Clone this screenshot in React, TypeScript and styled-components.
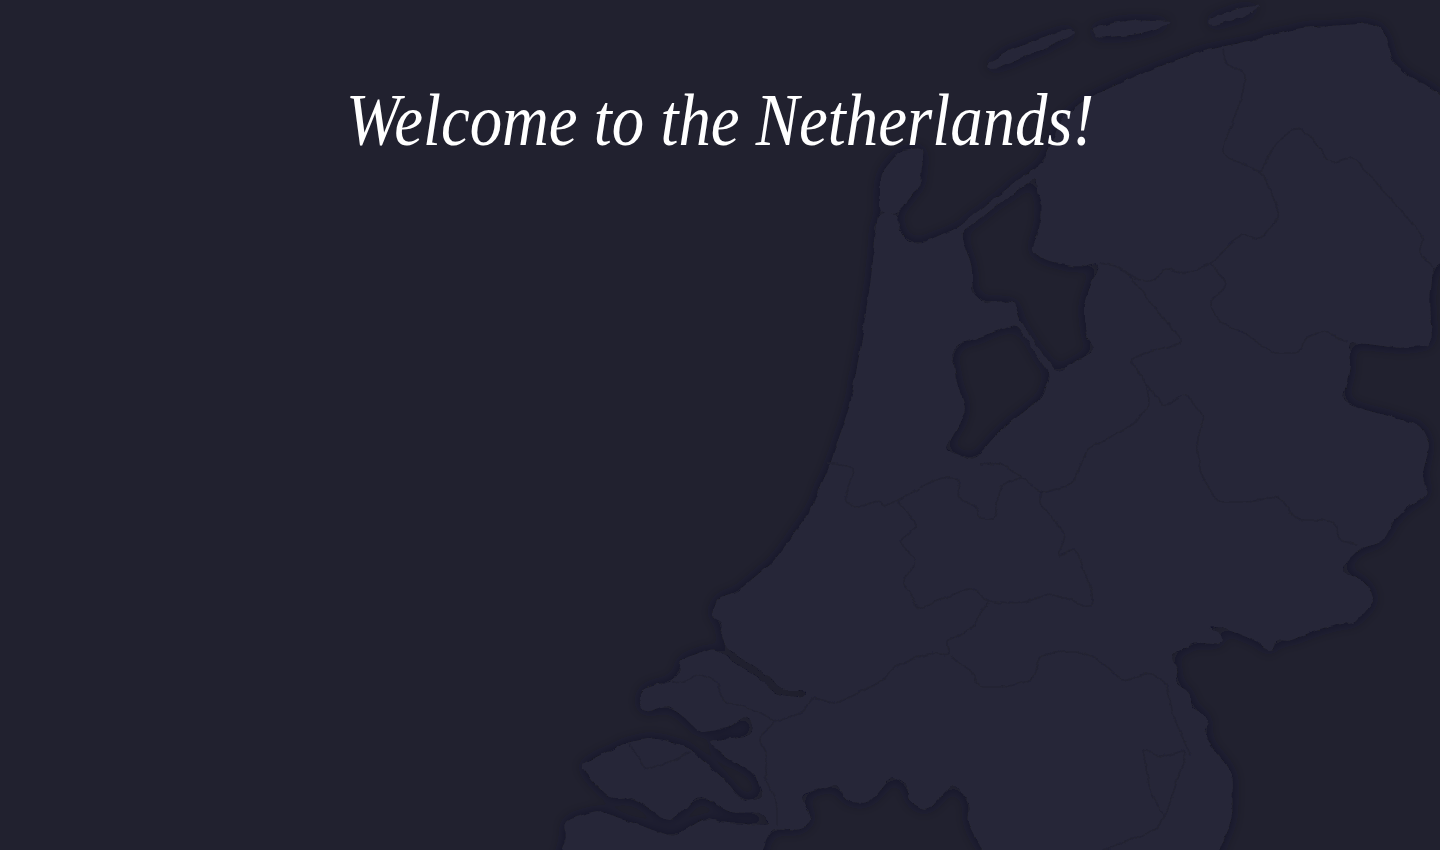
import styled, { createGlobalStyle } from 'styled-components';

type Punt = [number, number];

const raio = 7;

// rounds each corner only a little, long stretches stay straight
const recua = (de: Punt, para: Punt): Punt => {
  const dx = para[0] - de[0];
  const dy = para[1] - de[1];
  const len = Math.hypot(dx, dy) || 1;
  const r = Math.min(raio, len / 2);
  return [de[0] + (dx / len) * r, de[1] + (dy / len) * r];
};

const suaviza = (pts: Punt[], fechado = false): string => {
  const n = pts.length;
  if (fechado) {
    const ini = recua(pts[0], pts[n - 1]);
    let d = `M${ini[0]} ${ini[1]}`;
    pts.forEach((p, i) => {
      const prox = pts[(i + 1) % n];
      const sai = recua(p, prox);
      const entra = recua(prox, p);
      d += `Q${p[0]} ${p[1]} ${sai[0]} ${sai[1]}L${entra[0]} ${entra[1]}`;
    });
    return d + 'Z';
  }
  let d = `M${pts[0][0]} ${pts[0][1]}`;
  for (let i = 1; i < n - 1; i++) {
    const entra = recua(pts[i], pts[i - 1]);
    const sai = recua(pts[i], pts[i + 1]);
    d += `L${entra[0]} ${entra[1]}Q${pts[i][0]} ${pts[i][1]} ${sai[0]} ${sai[1]}`;
  }
  return d + `L${pts[n - 1][0]} ${pts[n - 1][1]}`;
};

const continente: Punt[] = [
  [878, 213], [872, 270], [862, 340], [850, 405], [830, 465], [808, 515], [775, 560], [743, 587], [731, 595], [718, 597],
  [712, 618], [724, 622], [720, 638], [727, 648], [745, 660], [768, 675], [780, 690], [806, 690], [804, 698], [775, 694],
  [758, 677], [735, 664], [716, 647], [680, 660], [680, 673], [670, 683], [643, 688], [638, 702], [645, 713], [666, 705],
  [682, 715], [700, 733], [731, 727], [743, 715], [755, 725], [748, 737], [708, 742], [727, 758], [754, 772], [764, 798],
  [743, 802], [727, 782], [700, 758], [685, 746], [655, 738], [628, 742], [580, 765], [596, 785], [613, 800], [632, 797],
  [670, 822], [700, 795], [731, 813], [758, 812], [772, 825], [724, 823], [705, 818], [674, 837], [647, 828], [597, 810],
  [563, 822], [567, 838], [561, 850], [555, 870], [762, 870], [762, 850], [773, 828], [804, 830], [812, 818], [800, 795],
  [838, 783], [846, 802], [869, 803], [892, 775], [909, 785], [907, 800], [927, 812], [953, 783], [970, 802], [968, 822],
  [978, 842], [999, 870], [1212, 870], [1232, 818], [1233, 775], [1220, 758], [1203, 733], [1210, 718], [1190, 708],
  [1190, 692], [1173, 683], [1180, 672], [1170, 655], [1197, 642], [1220, 645], [1223, 635], [1207, 627], [1220, 627],
  [1247, 637], [1273, 652], [1277, 638], [1287, 642], [1310, 632], [1343, 622], [1352, 625], [1370, 607], [1375, 595],
  [1360, 578], [1343, 572], [1343, 565], [1360, 548], [1383, 542], [1393, 522], [1410, 505], [1428, 495], [1422, 475],
  [1430, 445], [1420, 425], [1365, 410], [1342, 400], [1350, 370], [1350, 342], [1400, 348], [1432, 345], [1430, 300],
  [1433, 267], [1455, 255], [1455, 110], [1430, 87], [1410, 77], [1391, 60], [1385, 33], [1374, 23], [1300, 28], [1253, 40],
  [1200, 52], [1150, 70], [1090, 97], [1062, 118], [1042, 165], [1030, 171], [958, 227], [934, 238], [918, 245], [901, 236],
  [897, 213],
];

const lago: Punt[] = [
  [1036, 177], [1041, 207], [1039, 233], [1031, 250], [1047, 262], [1079, 267], [1100, 262], [1085, 300], [1085, 333],
  [1096, 350], [1056, 373], [1020, 322], [1014, 300], [985, 303], [972, 293], [972, 267], [960, 233],
];

const marker: Punt[] = [
  [1005, 328], [1016, 324], [1050, 375], [1040, 400], [1000, 430], [975, 460], [945, 450], [959, 425], [966, 410], [955, 377],
  [953, 348], [962, 343],
];

const ilhas: Punt[][] = [
  [[880, 175], [900, 150], [924, 148], [920, 185], [898, 213], [880, 213]],
  [[985, 66], [1010, 50], [1072, 28], [1075, 34], [1030, 54], [992, 70]],
  [[1090, 28], [1130, 20], [1173, 22], [1140, 34], [1098, 38]],
  [[1207, 20], [1240, 8], [1263, 5], [1240, 18], [1210, 26]],
];

const divisas: Punt[][] = [
  [[1223, 50], [1226, 65], [1246, 72], [1242, 97], [1223, 147], [1226, 157], [1261, 172], [1267, 180], [1280, 217], [1259, 240], [1242, 233], [1211, 263]],
  [[1100, 263], [1119, 267], [1138, 280], [1154, 282], [1165, 267], [1177, 273], [1192, 272], [1211, 263]],
  [[1261, 172], [1272, 147], [1295, 127], [1307, 132], [1330, 163], [1353, 157], [1395, 203], [1424, 238], [1418, 253], [1433, 267]],
  [[1211, 263], [1228, 285], [1209, 302], [1219, 322], [1246, 333], [1270, 353], [1301, 353], [1303, 340], [1322, 330], [1348, 342]],
  [[1119, 267], [1131, 277], [1165, 320], [1184, 342], [1129, 358], [1146, 383], [1165, 407], [1186, 393], [1204, 417], [1197, 442], [1200, 472], [1217, 502], [1253, 502], [1277, 495], [1297, 520], [1323, 520], [1337, 523], [1338, 540], [1357, 545]],
  [[1146, 383], [1150, 405], [1133, 425], [1087, 450], [1072, 485], [1041, 493]],
  [[827, 463], [854, 467], [844, 502], [858, 507], [881, 500], [883, 507], [898, 500], [930, 482], [946, 477], [961, 480], [957, 498], [978, 507], [978, 518], [995, 520], [999, 488], [1014, 480], [1022, 477], [1041, 493]],
  [[980, 465], [999, 463], [1022, 477]],
  [[898, 500], [919, 527], [898, 540], [917, 562], [902, 580], [919, 610], [944, 598], [973, 587], [988, 602], [1022, 603], [1053, 593], [1091, 608], [1093, 595], [1076, 548], [1057, 558], [1066, 535], [1039, 502], [1041, 493]],
  [[988, 602], [972, 628], [946, 642], [951, 655], [930, 653], [900, 663], [881, 682], [835, 704], [812, 697], [804, 712], [775, 722], [749, 708], [724, 703], [716, 680], [699, 673], [685, 683], [672, 682]],
  [[950, 655], [976, 675], [976, 687], [1007, 687], [1032, 680], [1041, 655], [1062, 652], [1083, 652], [1103, 663], [1123, 682], [1150, 672], [1167, 685], [1173, 715], [1190, 755]],
  [[1143, 750], [1160, 757], [1187, 750], [1165, 818], [1153, 832], [1103, 850]],
  [[1143, 750], [1150, 790], [1165, 818]],
  [[775, 722], [758, 738], [768, 758], [764, 775], [777, 803], [777, 825]],
  [[628, 742], [640, 760], [645, 770], [680, 758], [690, 752]],
];

const Global = createGlobalStyle`
  html, body {
    margin: 0;
    height: 100%;
    background-color: #21212f;
  }
`;

const Tela = styled.div`
  position: relative;
  width: 100%;
  height: 850px;
  overflow: hidden;
  background-color: #21212f;
`;

const Mapa = styled.svg`
  position: absolute;
  inset: 0;
  width: 1440px;
  height: 850px;
`;

const Terra = styled.path`
  fill: #282838;
  fill-rule: evenodd;
`;

const Divisa = styled.path`
  fill: none;
  stroke: #222231;
  stroke-width: 1.5;
  stroke-linejoin: round;
`;

const Titulo = styled.h1`
  position: relative;
  margin: 0;
  padding-top: 78px;
  text-align: center;
  font-family: "Liberation Serif", serif;
  font-style: italic;
  font-weight: 400;
  font-size: 75px;
  line-height: 84px;
  color: #ffffff;
  transform: scaleX(0.864);
  transform-origin: 721px 0;
`;

export default function App() {
  const caminhoTerra = [suaviza(continente, true), suaviza(lago, true), suaviza(marker, true)].join('');

  return (
    <Tela>
      <Global />
      <Mapa viewBox="0 0 1440 850">
        <defs>
          <filter id="costa" x="-10%" y="-10%" width="120%" height="120%">
            <feTurbulence type="fractalNoise" baseFrequency="0.09" numOctaves="2" seed="4" result="ruido" />
            <feDisplacementMap in="SourceGraphic" in2="ruido" scale="5" xChannelSelector="R" yChannelSelector="G" result="borda" />
            <feGaussianBlur in="borda" stdDeviation="0.7" result="macia" />
            <feDropShadow in="macia" dx="0" dy="0" stdDeviation="7" floodColor="#191925" floodOpacity="0.5" />
          </filter>
          <filter id="linha" x="-10%" y="-10%" width="120%" height="120%">
            <feTurbulence type="fractalNoise" baseFrequency="0.09" numOctaves="2" seed="4" result="ruido" />
            <feDisplacementMap in="SourceGraphic" in2="ruido" scale="4" xChannelSelector="R" yChannelSelector="G" />
          </filter>
        </defs>
        <g filter="url(#costa)">
          <Terra d={caminhoTerra} />
          {ilhas.map((ilha, i) => (
            <Terra key={i} d={suaviza(ilha, true)} />
          ))}
        </g>
        <g filter="url(#linha)">
          {divisas.map((linha, i) => (
            <Divisa key={i} d={suaviza(linha)} />
          ))}
        </g>
      </Mapa>
      <Titulo>Welcome to the Netherlands!</Titulo>
    </Tela>
  );
}
